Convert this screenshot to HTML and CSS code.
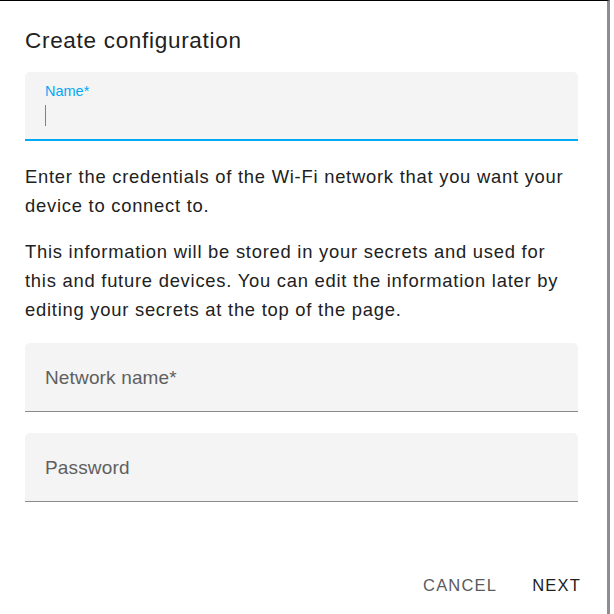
FILE: index.html
```html
<!DOCTYPE html>
<html lang="en">
<head>
<meta charset="utf-8">
<title>Create configuration</title>
<link rel="stylesheet" href="styles.css">
</head>
<body>
<div class="dialog">
  <h2 class="dialog-title">Create configuration</h2>
  <div class="dialog-content">
    <label class="field field--focused">
      <span class="field-label field-label--float">Name*</span>
      <span class="field-input"><span class="caret"></span></span>
    </label>
    <p class="text">Enter the credentials of the Wi-Fi network that you want your device to connect to.</p>
    <p class="text">This information will be stored in your secrets and used for this and future devices. You can edit the information later by editing your secrets at the top of the page.</p>
    <label class="field">
      <span class="field-label">Network name*</span>
    </label>
    <label class="field">
      <span class="field-label">Password</span>
    </label>
  </div>
  <div class="dialog-actions">
    <button class="btn btn--muted" type="button">Cancel</button>
    <button class="btn" type="button">Next</button>
  </div>
</div>
</body>
</html>
```
FILE: styles.css
```css
html, body {
  margin: 0;
  padding: 0;
  background: #fff;
}

body {
  font-family: "Liberation Sans", Arial, sans-serif;
  color: #212121;
}

.dialog {
  box-sizing: border-box;
  width: 610px;
  height: 614px;
  border-top: 1px solid #000;
  border-right: 3px solid #8e8e8e;
  display: flex;
  flex-direction: column;
}

.dialog-title {
  margin: 0;
  padding: 24px 29px 0 25px;
  font-size: 22.5px;
  font-weight: 400;
  letter-spacing: 0.7px;
  line-height: 32px;
  color: #212121;
}

.dialog-content {
  padding: 15px 29px 0 25px;
  display: flex;
  flex-direction: column;
}

.field {
  position: relative;
  display: block;
  height: 68px;
  background: #f4f4f4;
  border-radius: 5px 5px 0 0;
  border-bottom: 1px solid #8a8a8a;
}

.field--focused {
  height: 67px;
  border-bottom: 2px solid #03a9f4;
}

.field-label {
  position: absolute;
  left: 20px;
  top: 23px;
  font-size: 19px;
  letter-spacing: 0.15px;
  line-height: 24px;
  color: #5f5f5f;
}

.field-label--float {
  top: 10px;
  font-size: 14.5px;
  letter-spacing: 0;
  line-height: 18px;
  color: #03a9f4;
}

.field-input {
  position: absolute;
  left: 20px;
  top: 33px;
  height: 21px;
}

.caret {
  display: block;
  width: 1px;
  height: 21px;
  background: #03a9f4;
}

.text {
  margin: 21px 0 0;
  font-size: 18.4px;
  letter-spacing: 0.75px;
  line-height: 29px;
  color: #212121;
}

.text + .text {
  margin-top: 17px;
}

.text + .field {
  margin-top: 19px;
}

.field + .field {
  margin-top: 21px;
}

.dialog-actions {
  margin-top: auto;
  display: flex;
  justify-content: flex-end;
  gap: 23px;
  padding: 0 20px 11px 0;
}

.btn {
  border: 0;
  background: none;
  padding: 8px 6px;
  font-family: "Liberation Sans", Arial, sans-serif;
  font-size: 16.5px;
  font-weight: 400;
  letter-spacing: 1.2px;
  text-transform: uppercase;
  color: #212121;
  cursor: pointer;
}

.btn--muted {
  color: #5a5a5a;
}
```
